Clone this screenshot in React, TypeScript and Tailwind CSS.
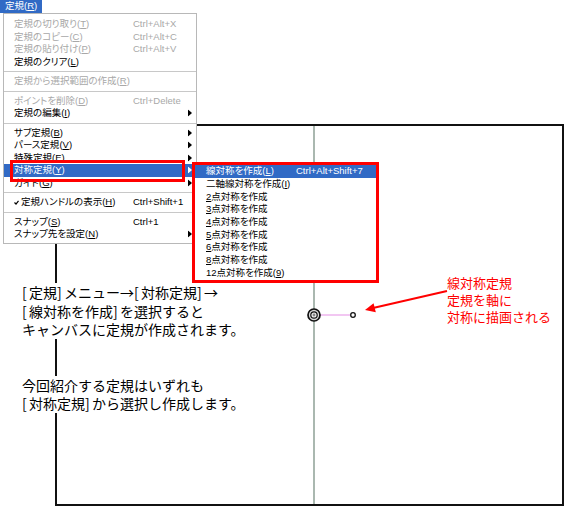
import React from "react";

type Row =
  | { sep: true }
  | {
      sep?: false;
      t: string;
      m?: string;
      s?: string;
      d?: boolean;
      a?: boolean;
      h?: boolean;
      c?: boolean;
    };

const mainItems: Row[] = [
  { t: "定規の切り取り", m: "T", s: "Ctrl+Alt+X", d: true },
  { t: "定規のコピー", m: "C", s: "Ctrl+Alt+C", d: true },
  { t: "定規の貼り付け", m: "P", s: "Ctrl+Alt+V", d: true },
  { t: "定規のクリア", m: "L" },
  { sep: true },
  { t: "定規から選択範囲の作成", m: "R", d: true },
  { sep: true },
  { t: "ポイントを削除", m: "D", s: "Ctrl+Delete", d: true },
  { t: "定規の編集", m: "I", a: true },
  { sep: true },
  { t: "サブ定規", m: "B", a: true },
  { t: "パース定規", m: "V", a: true },
  { t: "特殊定規", m: "E", a: true },
  { t: "対称定規", m: "Y", a: true, h: true },
  { t: "ガイド", m: "G", a: true },
  { sep: true },
  { t: "定規ハンドルの表示", m: "H", s: "Ctrl+Shift+1", c: true },
  { sep: true },
  { t: "スナップ", m: "S", s: "Ctrl+1" },
  { t: "スナップ先を設定", m: "N", a: true },
];

function Arrow({ white }: { white?: boolean }) {
  return (
    <svg
      width="4"
      height="7"
      viewBox="0 0 4 7"
      className="absolute right-[4px] top-1/2 -translate-y-1/2"
    >
      <polygon points="0,0 4,3.5 0,7" fill={white ? "#ffffff" : "#000000"} />
    </svg>
  );
}

function MainRow({ r }: { r: Exclude<Row, { sep: true }> }) {
  const color = r.h ? "text-white" : r.d ? "text-[#a8a8a8]" : "text-black";
  return (
    <div
      className={`relative flex items-center h-[12.5px] pl-[10px] ${
        r.h ? "bg-[#316ac5]" : ""
      } ${color}`}
    >
      <span className="w-[119px] shrink-0 flex items-center whitespace-nowrap">
        {r.c && (
          <svg width="5" height="5" viewBox="0 0 5 5" className="mr-[2px]">
            <polyline
              points="0.5,2.5 2,4 4.5,0.8"
              fill="none"
              stroke="#000"
              strokeWidth="1.2"
            />
          </svg>
        )}
        {r.t}
        {r.m && (
          <>
            (<u>{r.m}</u>)
          </>
        )}
      </span>
      {r.s && <span className="whitespace-nowrap">{r.s}</span>}
      {r.a && <Arrow white={r.h} />}
    </div>
  );
}

const subItems: { pre?: string; u: string; post: string; s?: string }[] = [
  { pre: "線対称を作成(", u: "L", post: ")", s: "Ctrl+Alt+Shift+7" },
  { pre: "二軸線対称を作成(", u: "I", post: ")" },
  { u: "2", post: "点対称を作成" },
  { u: "3", post: "点対称を作成" },
  { u: "4", post: "点対称を作成" },
  { u: "5", post: "点対称を作成" },
  { u: "6", post: "点対称を作成" },
  { u: "8", post: "点対称を作成" },
  { pre: "12点対称を作成(", u: "9", post: ")" },
];

function B({ c }: { c: string }) {
  return <span className="inline-block w-[7px]">{c}</span>;
}

export default function App() {
  return (
    <div className="relative w-[565px] h-[508px] bg-white overflow-hidden font-['Liberation_Sans','Noto_Sans_CJK_JP',sans-serif]">
      {/* Canvas */}
      <div className="pt-[124px] pl-[55px]">
        <div className="relative w-[509px] h-[382px] border-2 border-[#111]">
          <div className="absolute left-[256px] top-0 bottom-0 w-[2px] bg-[#aab8b0]" />
        </div>
      </div>

      {/* Marker and arrow drawing */}
      <svg
        className="absolute left-0 top-0 pointer-events-none"
        width="565"
        height="508"
        viewBox="0 0 565 508"
      >
        <line x1="320" y1="315" x2="350" y2="315" stroke="#e58fe5" strokeWidth="1" />
        <circle cx="314" cy="315" r="6" fill="#d8d8d8" stroke="#111" strokeWidth="1.7" />
        <circle cx="314" cy="315" r="3.2" fill="#eeeeee" stroke="#111" strokeWidth="1.2" />
        <circle cx="314" cy="315" r="1.4" fill="#888" />
        <circle cx="353" cy="315" r="2.3" fill="#fff" stroke="#111" strokeWidth="1.3" />
        <line x1="447" y1="291" x2="373" y2="308" stroke="#ff0000" strokeWidth="2" />
        <polygon points="365,310 375.8,312.2 373.6,303.2" fill="#ff0000" />
      </svg>

      {/* Red annotation */}
      <div className="absolute left-[447px] top-[274px] text-[13px] leading-[17px] text-[#ff0000] font-['Noto_Sans_CJK_JP',sans-serif] whitespace-nowrap">
        <div>線対称定規</div>
        <div>定規を軸に</div>
        <div>対称に描画される</div>
      </div>

      {/* Explanation text */}
      <div className="absolute left-[22px] top-[283px] flex flex-col gap-[37px] text-[14px] leading-[18.5px] text-black font-['Noto_Sans_CJK_JP',sans-serif] whitespace-nowrap">
        <div className="bg-white w-fit">
          <div>
            <B c="[" />定規<B c="]" />メニュー→<B c="[" />対称定規<B c="]" />→
          </div>
          <div>
            <B c="[" />線対称を作成<B c="]" />を選択すると
          </div>
          <div>キャンバスに定規が作成されます。</div>
        </div>
        <div className="bg-white w-fit">
          <div>今回紹介する定規はいずれも</div>
          <div>
            <B c="[" />対称定規<B c="]" />から選択し作成します。
          </div>
        </div>
      </div>

      {/* Menu */}
      <div className="absolute left-0 top-0 text-[9.5px] [font-feature-settings:'palt']">
        <div className="h-[13px] w-[42px] bg-[#316ac5] text-white flex items-center pl-[5px] whitespace-nowrap">
          定規(<u>R</u>)
        </div>
        <div className="ml-[3px] w-[194px] bg-white border border-[#b8b8b8] pt-[4px] pb-[2px] px-0">
          {mainItems.map((r, i) =>
            r.sep ? (
              <div key={i} className="h-[7px] flex items-center">
                <div className="h-px w-full bg-[#c8c8c8]" />
              </div>
            ) : (
              <MainRow key={i} r={r} />
            )
          )}
        </div>
      </div>

      {/* Red box around 対称定規 */}
      <div className="absolute left-[10px] top-[160px] w-[175px] h-[22px] border-[3px] border-[#ff0000]" />

      {/* Submenu */}
      <div className="absolute left-[192px] top-[162px] w-[187px] h-[121px] border-[3px] border-[#ff0000] bg-white text-[9.5px] [font-feature-settings:'palt']">
        {subItems.map((it, i) => (
          <div
            key={i}
            className={`flex items-center h-[12.7px] pl-[11px] whitespace-nowrap ${
              i === 0 ? "bg-[#316ac5] text-white" : "text-black"
            }`}
          >
            <span className="w-[90px] shrink-0">
              {it.pre}
              <u>{it.u}</u>
              {it.post}
            </span>
            {it.s && <span>{it.s}</span>}
          </div>
        ))}
      </div>
    </div>
  );
}
